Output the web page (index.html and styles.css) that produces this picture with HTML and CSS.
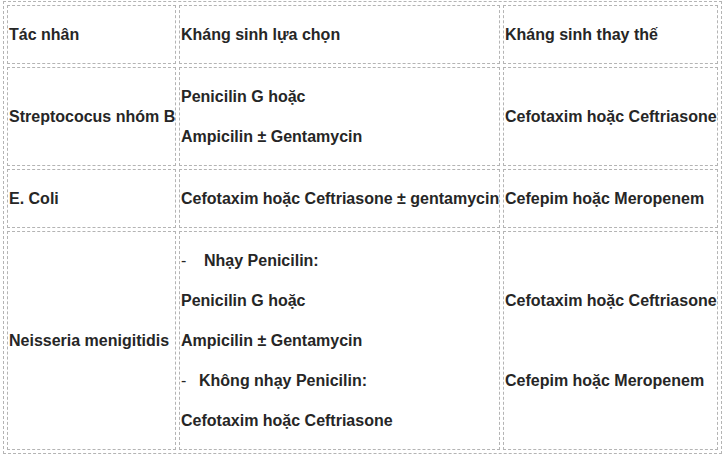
FILE: index.html
```html
<!DOCTYPE html>
<html>
<head>
<meta charset="utf-8">
<link rel="stylesheet" href="styles.css">
</head>
<body>
<table class="grid">
  <colgroup>
    <col class="c1">
    <col class="c2">
    <col class="c3">
  </colgroup>
  <tr>
    <td><p>Tác nhân</p></td>
    <td><p>Kháng sinh lựa chọn</p></td>
    <td><p>Kháng sinh thay thế</p></td>
  </tr>
  <tr>
    <td><p>Streptococus nhóm B</p></td>
    <td><p>Penicilin G hoặc</p><p>Ampicilin ± Gentamycin</p></td>
    <td><p>Cefotaxim hoặc Ceftriasone</p></td>
  </tr>
  <tr>
    <td><p>E. Coli</p></td>
    <td><p>Cefotaxim hoặc Ceftriasone ± gentamycin</p></td>
    <td><p>Cefepim hoặc Meropenem</p></td>
  </tr>
  <tr>
    <td><p>Neisseria menigitidis</p></td>
    <td>
      <p><span class="dash wide">-</span>Nhạy Penicilin:</p>
      <p>Penicilin G hoặc</p>
      <p>Ampicilin ± Gentamycin</p>
      <p><span class="dash">-</span>Không nhạy Penicilin:</p>
      <p>Cefotaxim hoặc Ceftriasone</p>
    </td>
    <td>
      <p>Cefotaxim hoặc Ceftriasone</p>
      <p>&nbsp;</p>
      <p>Cefepim hoặc Meropenem</p>
    </td>
  </tr>
</table>
</body>
</html>
```

FILE: styles.css
```css
html, body {
  margin: 0;
  padding: 0;
  background: #ffffff;
}

body {
  padding: 1px 0 0 3px;
  font-family: "Liberation Sans", Arial, sans-serif;
  font-size: 16px;
  font-weight: bold;
  color: #262626;
}

.grid {
  border: 1px dashed #b4b4b4;
  border-collapse: separate;
  border-spacing: 3px;
  table-layout: fixed;
  width: 719px;
}

.c1 { width: 169px; }
.c2 { width: 321px; }
.c3 { width: 215px; }

.grid td {
  border: 1px dashed #b4b4b4;
  padding: 1px;
  vertical-align: middle;
  white-space: nowrap;
}

.grid p {
  margin: 15px 0;
  line-height: 25px;
}

.dash {
  display: inline-block;
  width: 18px;
  font-weight: normal;
}

.dash.wide {
  width: 23px;
}
```
